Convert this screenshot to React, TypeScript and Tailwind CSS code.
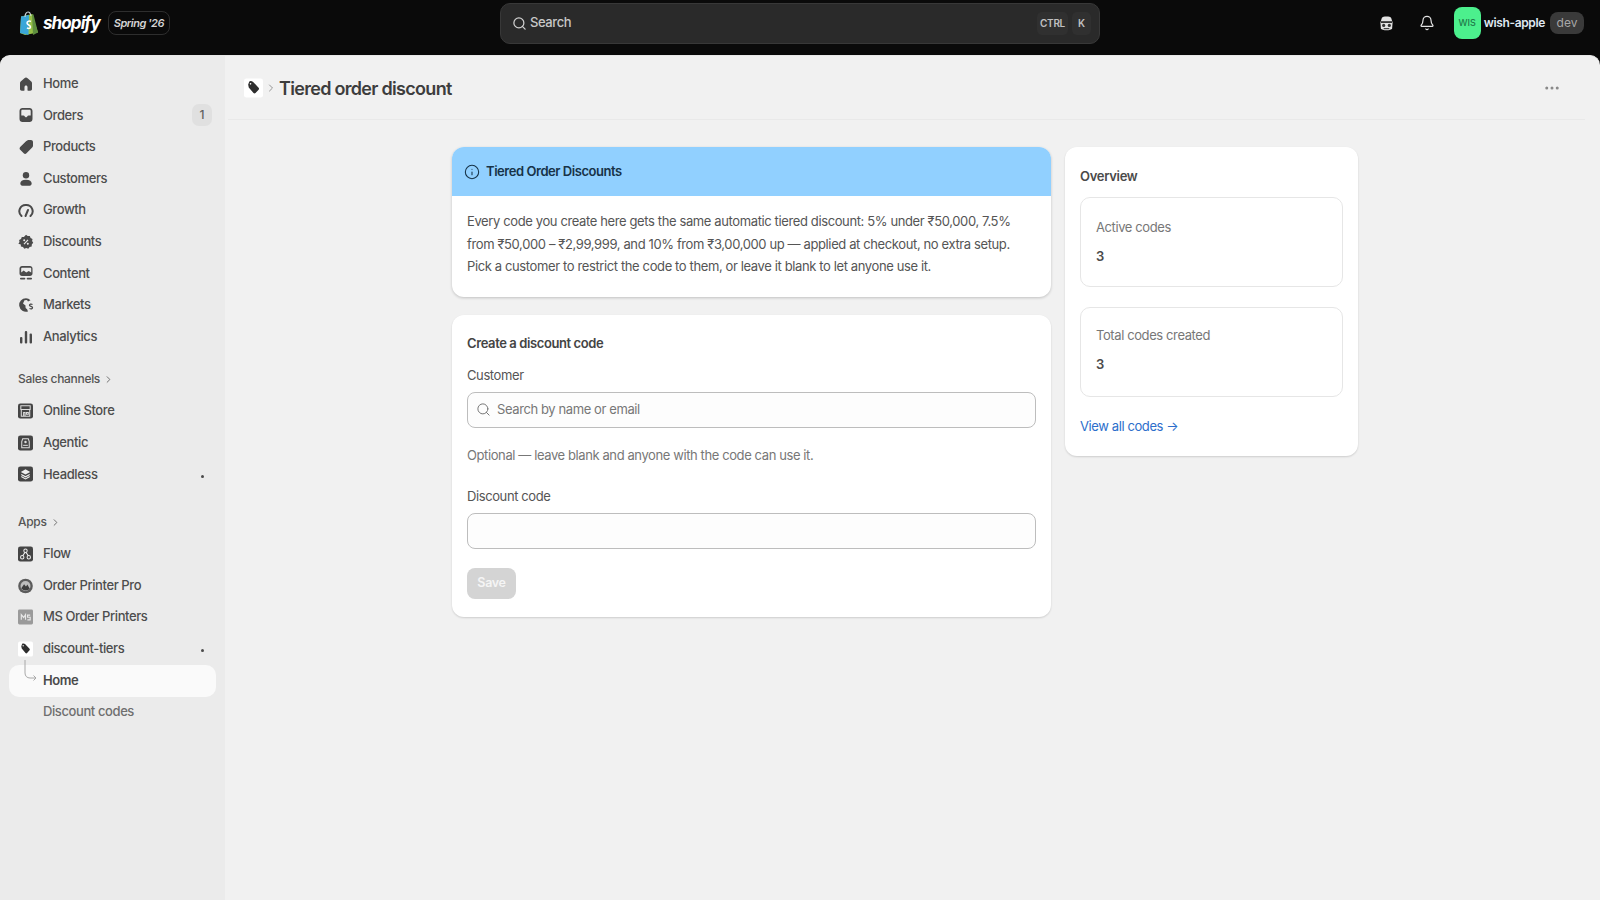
import { Search, Info, Bell, ChevronRight, MoreHorizontal } from 'lucide-react';
import type { ReactNode } from 'react';

const Ico = ({ children }: { children: ReactNode }) => (
  <svg viewBox="0 0 16 16" className="w-4 h-4 shrink-0" fill="#4a4a4a">{children}</svg>
);

const HomeIcon = () => <Ico><path d="M8 1.500c-.6 0-1.100.3-1.600.7L3 5.200c-.8.7-1 1.300-1 2.300V13c0 1 .8 1.700 1.700 1.700H6c.3 0 .5-.2.5-.5V11c0-.8.7-1.500 1.500-1.500s1.500.7 1.500 1.500v3.200c0 .3.2.5.5.5h2.300c.9 0 1.700-.7 1.700-1.700V7.500c0-1-.2-1.600-1-2.300L9.600 2.200C9.100 1.800 8.600 1.500 8 1.500z" /></Ico>;
const OrdersIcon = () => <Ico><path fillRule="evenodd" d="M4.500 1h7c1.700 0 3 1.300 3 3v8c0 1.700-1.300 3-3 3h-7c-1.700 0-3-1.300-3-3V4c0-1.700 1.300-3 3-3zM3.300 8.500V4c0-.7.500-1.200 1.200-1.200h7c.7 0 1.200.5 1.200 1.200v4.500h-2.200c-.5 0-.9.300-1.100.7-.1.300-.7 1-1.400 1s-1.300-.7-1.400-1c-.2-.4-.6-.7-1.100-.7z" /></Ico>;
const TagIcon = () => <Ico><path d="M9.300 1h3.700c1.100 0 2 .9 2 2v3.700c0 .6-.2 1.100-.6 1.500l-5.900 6.100c-.8.8-2 .8-2.800 0l-3.500-3.500c-.8-.8-.8-2 0-2.800l6.100-5.900c.4-.4.9-.6 1.500-.6z" /></Ico>;
const PersonIcon = () => <Ico><circle cx="8" cy="4.200" r="3.200" /><path d="M2.300 12.500c0-2.200 2-3.800 5.700-3.800s5.700 1.600 5.700 3.800c0 1.200-.8 2.200-2 2.200H4.300c-1.200 0-2-1-2-2.200z" /></Ico>;
const GrowthIcon = () => (
  <svg viewBox="0 0 16 16" className="w-4 h-4 shrink-0" fill="none" stroke="#4a4a4a" strokeWidth="2" strokeLinecap="round">
    <path d="M3.500 14A6.300 6.300 0 0 1 8 3a6.300 6.300 0 0 1 4.500 11" />
    <path d="M7.500 14 10 8" />
  </svg>
);
const DiscountIcon = () => (
  <Ico>
    <path d="M8 .8l1.700 1.300 2.100-.2.800 2 1.900 1-.4 2.100 1.100 1.800-1.400 1.600-.1 2.100-2.100.5-1.300 1.700-2-.7-2 .7-1.300-1.700-2.100-.5-.1-2.100L.4 9.800l1.100-1.800-.4-2.100 1.900-1 .8-2 2.100.2z" />
    <circle cx="6.200" cy="6.200" r="1" fill="#ebebeb" /><circle cx="9.800" cy="9.800" r="1" fill="#ebebeb" />
    <path d="M10 5.800 6 10.200" stroke="#ebebeb" strokeWidth="1.100" />
  </Ico>
);
const ContentIcon = () => (
  <Ico>
    <path fillRule="evenodd" d="M4 1h8c1.400 0 2.500 1.100 2.500 2.500v5c0 1.400-1.100 2.500-2.500 2.500H4c-1.400 0-2.500-1.100-2.500-2.500v-5C1.500 2.100 2.600 1 4 1zm-.8 6.500 2.500-2 2.500 2 2.500-1.500 2.500 1.500v-4c0-.5-.4-.8-.7-.8H4c-.4 0-.8.300-.8.800z" />
    <rect x="2" y="12.800" width="5.300" height="1.700" rx=".8" /><rect x="8.700" y="12.800" width="5.300" height="1.700" rx=".8" />
  </Ico>
);
const MarketsIcon = () => (
  <Ico>
    <path d="M8 1.200A6.800 6.800 0 1 0 10 14.500l-1-2.500c-.8-.3-1.500-1-1.500-2V8.500L5 6.500l1.500-3.300 2.500-.2 1 1.500 2.500-1.300A6.800 6.800 0 0 0 8 1.200z" />
    <path d="M14.500 7.500c-1.500-.8-3-.3-3 .8 0 1.300 3 .9 3 2.300 0 1.200-1.500 1.600-3 .9" fill="none" stroke="#4a4a4a" strokeWidth="1.300" />
  </Ico>
);
const AnalyticsIcon = () => (
  <Ico><rect x="2" y="8" width="2.400" height="6.500" rx="1" /><rect x="6.800" y="2" width="2.400" height="12.500" rx="1" /><rect x="11.600" y="4.500" width="2.400" height="10" rx="1" /></Ico>
);
const DarkSquare = ({ children }: { children: ReactNode }) => (
  <svg viewBox="0 0 16 16" className="w-[15px] h-[16px] shrink-0">
    <rect x="0" y="0" width="16" height="16" rx="2.500" fill="#454545" />
    {children}
  </svg>
);
const StoreIcon = () => (
  <DarkSquare>
    <path d="M3 2.500h10v4H3z" fill="none" stroke="#ddd" strokeWidth="1.100" />
    <path d="M3.500 7v6.500h9V7M6 13.500V9.500h1.500v4M9 9.500h2v2H9z" fill="none" stroke="#ddd" strokeWidth="1.100" />
  </DarkSquare>
);
const AgenticIcon = () => (
  <DarkSquare>
    <path d="M5 3.500h6l1 3v6.500H4V6.500z" fill="none" stroke="#ddd" strokeWidth="1.100" />
    <circle cx="8" cy="7" r="1.300" fill="#ddd" />
    <path d="M5.500 10.500h5" stroke="#ddd" strokeWidth="1.100" />
  </DarkSquare>
);
const HeadlessIcon = () => (
  <DarkSquare>
    <path d="M8 3 13 5.800 8 8.600 3 5.800z" fill="#eee" />
    <path d="M3.500 8.500 8 11l4.500-2.500M3.500 10.700 8 13.200l4.500-2.500" fill="none" stroke="#eee" strokeWidth="1.200" />
  </DarkSquare>
);
const FlowIcon = () => (
  <DarkSquare>
    <circle cx="8" cy="4.500" r="1.800" fill="none" stroke="#eee" strokeWidth="1.100" />
    <circle cx="4.500" cy="11.500" r="1.800" fill="none" stroke="#eee" strokeWidth="1.100" />
    <circle cx="11.500" cy="11.500" r="1.800" fill="none" stroke="#eee" strokeWidth="1.100" />
    <path d="M7.500 6.300 5 9.800M8.500 6.300 11 9.800" stroke="#eee" strokeWidth="1.100" />
  </DarkSquare>
);
const PrinterProIcon = () => (
  <svg viewBox="0 0 16 16" className="w-[15px] h-[16px] shrink-0">
    <circle cx="8" cy="8" r="7.800" fill="#5c5c5c" />
    <circle cx="8" cy="8" r="5.300" fill="#bdbdbd" />
    <path d="M3.500 10.500 6.500 6l2 2.500 1.500-2 2.500 4.500c-2.500 2.500-6.500 2.500-9-.5z" fill="#3d3d3d" />
  </svg>
);
const MsIcon = () => (
  <svg viewBox="0 0 16 16" className="w-[15px] h-[16px] shrink-0">
    <rect width="16" height="16" rx="1.500" fill="#9a9a9a" />
    <path d="M3.500 11V5.500L6 8.500l2-3V11M13 6H10.200v2.200H13V11h-3" fill="none" stroke="#e8e8e8" strokeWidth="1.200" />
  </svg>
);
const AppTag = ({ size }: { size: string }) => (
  <svg viewBox="0 0 16 16" className={size}>
    <rect width="16" height="16" rx="2" fill="#ffffff" />
    <path d="M4.500 2.500c.3-.5 1-.6 1.500-.4l1.500.6 4.800 5c.5.500.5 1.200 0 1.700l-2.600 2.900c-.5.500-1.200.5-1.700 0L4 7.500 3.500 5z" fill="#2e2e2e" />
    <circle cx="5.500" cy="4.500" r=".7" fill="#fff" />
  </svg>
);

const Item = ({ icon, label, right }: { icon: ReactNode; label: string; right?: ReactNode }) => (
  <div className="h-[31.6px] flex items-center pl-[18px] pr-[13px]">
    <span className="w-[25px] flex items-center">{icon}</span>
    <span className="text-[13px] font-medium text-[#4d4d4d] tracking-[-0.4px]">{label}</span>
    {right && <span className="ml-auto">{right}</span>}
  </div>
);

const Dot = () => <span className="block w-[3px] h-[3px] rounded-full bg-[#4a4a4a] mr-[8px] mt-[4px]" />;

const GroupLabel = ({ label }: { label: string }) => (
  <div className="h-[20px] flex items-center gap-[3px] pl-[18px] text-[12px] font-medium text-[#555555] tracking-[-0.3px]">
    {label}
    <ChevronRight size={11} strokeWidth={2} className="text-[#666666]" />
  </div>
);

const Field = ({ children, icon }: { children?: ReactNode; icon?: boolean }) => (
  <div className="h-[36px] rounded-[8px] border border-[#bdbdbd] bg-[#fdfdfd] flex items-center px-[8px] gap-[6px]">
    {icon && <Search size={15} strokeWidth={1.600} className="text-[#777777]" />}
    {children}
  </div>
);

const Stat = ({ label, pad }: { label: string; pad: string }) => (
  <div className={`h-[90px] rounded-[10px] border border-[#e6e6e6] px-[15px] ${pad}`}>
    <div className="text-[13px] leading-[20px] text-[#777777] tracking-[-0.4px]">{label}</div>
    <div className="mt-[9px] text-[13px] leading-[20px] font-semibold text-[#4a4a4a]">3</div>
  </div>
);

export default function App() {
  return (
    <div className="w-[1600px] h-[900px] overflow-hidden bg-[#0a0a0a] flex flex-col font-['Inter',sans-serif]">
      <header className="h-[55px] shrink-0 pb-[9px] grid grid-cols-[500px_600px_500px] items-center">
        <div className="flex items-center pl-[19px]">
          <svg viewBox="0 0 20 24" className="w-[20px] h-[24px] shrink-0">
            <path d="M2 5.500 13 3l6 18.500L6 24l-5-2z" fill="#95bf47" />
            <path d="M2 5.500 10 4l-.5 20-8.500-2z" fill="#3aa6d8" />
            <path d="M6 6c0-3 1.500-5 3-5s2.500 1.500 3 4" fill="none" stroke="#cfd8dc" strokeWidth="1.100" />
            <path d="M13 3l1.500.5L19 21.500 14 24z" fill="#5e8e3e" />
            <path d="M12 10.500c-1.500-.8-4-.4-4 1.500 0 2 3.500 2 3.500 4 0 1.500-2 1.800-3.500.8" fill="none" stroke="#fff" strokeWidth="1.500" />
          </svg>
          <span className="ml-[4px] text-[17px] font-bold italic text-white tracking-[-0.9px] leading-none">shopify</span>
          <span className="ml-[8px] h-[24px] px-[5px] rounded-[8px] border border-[#2e2e2e] flex items-center text-[11px] font-semibold italic text-[#d4d4d4] tracking-[-0.5px]">Spring '26</span>
        </div>
        <div className="h-[41px] rounded-[10px] bg-[#2a2a2a] border border-[#383838] flex items-center pl-[11px] pr-[8px]">
          <Search size={15} strokeWidth={2} className="text-[#d0d0d0]" />
          <span className="ml-[3px] text-[13px] font-medium text-[#c8c8c8] tracking-[-0.4px]">Search</span>
          <span className="ml-auto h-[23px] w-[31px] rounded-[5px] bg-[#303030] flex items-center justify-center text-[10px] font-semibold text-[#c0c0c0] tracking-[-0.3px]">CTRL</span>
          <span className="ml-[4px] h-[23px] w-[19px] rounded-[5px] bg-[#303030] flex items-center justify-center text-[10px] font-semibold text-[#c0c0c0]">K</span>
        </div>
        <div className="flex items-center justify-end pr-[16px]">
          <svg viewBox="0 0 16 18" className="w-[15px] h-[17px] mr-[25px]">
            <path d="M3 3c1-2 9-2 10 0l1.500 5-.5 6c-1 3-11 3-12 0L1.500 8z" fill="#e2e2e2" />
            <path d="M2 6.500h12v2H2z" fill="#333" />
            <circle cx="5" cy="11" r="1.700" fill="#333" /><circle cx="11" cy="11" r="1.700" fill="#333" />
            <path d="M5 14.500h6" stroke="#333" strokeWidth="1.200" />
          </svg>
          <Bell size={16} strokeWidth={1.800} className="text-[#e3e3e3] mr-[19px]" />
          <span className="w-[27px] h-[32px] rounded-[8px] bg-[#4cf08d] flex items-center justify-center text-[9px] font-medium text-[#1f7a4a]">WIS</span>
          <span className="ml-[3px] text-[12px] font-semibold text-[#dfe7f2] tracking-[-0.35px]">wish-apple</span>
          <span className="ml-[5px] h-[22px] w-[34px] rounded-[8px] bg-[#3a3a3a] flex items-center justify-center text-[12px] text-[#a8a8a8]">dev</span>
        </div>
      </header>

      <div className="flex-1 min-h-0 flex rounded-t-[10px] overflow-hidden bg-[#f1f1f1] border-t border-[#e8e8e8]">
        <aside className="w-[225px] shrink-0 bg-[#ebebeb] pt-[12px]">
          <Item icon={<HomeIcon />} label="Home" />
          <Item
            icon={<OrdersIcon />}
            label="Orders"
            right={<span className="w-[20px] h-[22px] rounded-[7px] bg-[#e0e0e0] flex items-center justify-center text-[12px] font-medium text-[#616161]">1</span>}
          />
          <Item icon={<TagIcon />} label="Products" />
          <Item icon={<PersonIcon />} label="Customers" />
          <Item icon={<GrowthIcon />} label="Growth" />
          <Item icon={<DiscountIcon />} label="Discounts" />
          <Item icon={<ContentIcon />} label="Content" />
          <Item icon={<MarketsIcon />} label="Markets" />
          <Item icon={<AnalyticsIcon />} label="Analytics" />
          <div className="mt-[17px] mb-[6px]"><GroupLabel label="Sales channels" /></div>
          <Item icon={<StoreIcon />} label="Online Store" />
          <Item icon={<AgenticIcon />} label="Agentic" />
          <Item icon={<HeadlessIcon />} label="Headless" right={<Dot />} />
          <div className="mt-[22px] mb-[6px]"><GroupLabel label="Apps" /></div>
          <Item icon={<FlowIcon />} label="Flow" />
          <Item icon={<PrinterProIcon />} label="Order Printer Pro" />
          <Item icon={<MsIcon />} label="MS Order Printers" />
          <Item icon={<AppTag size="w-[15px] h-[16px] shrink-0" />} label="discount-tiers" right={<Dot />} />
          <div className="relative mx-[9px] w-[207px] h-[32px] rounded-[10px] bg-[#fafafa] flex items-center pl-[34px] text-[13px] font-semibold text-[#4a4a4a] tracking-[-0.4px]">
            Home
            <svg viewBox="0 0 14 24" className="absolute left-[15px] top-[-5px] w-[14px] h-[24px]" fill="none" stroke="#a8a8a8" strokeWidth="1">
              <path d="M1 0v13c0 3 2 5 5 5h6M9.500 15.500 12 18l-2.500 2.500" />
            </svg>
          </div>
          <div className="h-[30px] flex items-center pl-[43px] text-[13px] font-medium text-[#6f6f6f] tracking-[-0.4px]">Discount codes</div>
        </aside>

        <main className="flex-1 min-w-0 flex flex-col">
          <div className="h-[64px] shrink-0 mr-[15px] ml-[3px] border-b border-[#e9e9e9] flex items-center pl-[16px] pr-[24px]">
            <AppTag size="w-[19px] h-[22px] shrink-0" />
            <ChevronRight size={12} strokeWidth={1.800} className="text-[#8a8a8a] ml-[2px] mr-[2px]" />
            <h1 className="mt-[2px] text-[18px] font-semibold text-[#3d3d3d] tracking-[-0.7px]">Tiered order discount</h1>
            <MoreHorizontal size={18} strokeWidth={2} className="ml-auto mt-[1px] text-[#8a8a8a]" />
          </div>
          <div className="pl-[227px] pt-[27px] flex items-start gap-[14px]">
            <div className="w-[599px] flex flex-col gap-[18px]">
              <section className="rounded-[12px] bg-white overflow-hidden shadow-[0_1px_3px_rgba(0,0,0,0.2)]">
                <div className="h-[49px] bg-[#91d0ff] flex items-center gap-[6px] pl-[12px] text-[13px] font-semibold text-[#173348] tracking-[-0.45px]">
                  <Info size={16} strokeWidth={1.600} />
                  Tiered Order Discounts
                </div>
                <p className="px-[15px] pt-[14px] pb-[19px] text-[13px] leading-[22.5px] text-[#555555] tracking-[-0.38px]">
                  Every code you create here gets the same automatic tiered discount: 5% under ₹50,000, 7.5% from ₹50,000 – ₹2,99,999, and 10% from ₹3,00,000 up — applied at checkout, no extra setup. Pick a customer to restrict the code to them, or leave it blank to let anyone use it.
                </p>
              </section>
              <section className="h-[302px] rounded-[12px] bg-white px-[15px] pt-[18px] shadow-[0_1px_2px_rgba(0,0,0,0.15)]">
                <h2 className="text-[13px] leading-[20px] font-semibold text-[#444444] tracking-[-0.4px]">Create a discount code</h2>
                <div className="mt-[12px] mb-[7px] text-[13px] leading-[20px] text-[#555555] tracking-[-0.4px]">Customer</div>
                <Field icon><span className="text-[13px] text-[#777777] tracking-[-0.4px]">Search by name or email</span></Field>
                <div className="mt-[17px] text-[13px] leading-[20px] text-[#777777] tracking-[-0.4px]">Optional — leave blank and anyone with the code can use it.</div>
                <div className="mt-[21px] mb-[7px] text-[13px] leading-[20px] text-[#555555] tracking-[-0.4px]">Discount code</div>
                <Field />
                <button className="mt-[19px] w-[49px] h-[31px] rounded-[8px] bg-[#d4d4d4] text-[12.5px] font-semibold text-[#f5f5f5] tracking-[-0.3px]">Save</button>
              </section>
            </div>
            <section className="w-[293px] h-[309px] rounded-[12px] bg-white px-[15px] pt-[19px] shadow-[0_1px_2px_rgba(0,0,0,0.15)]">
              <h2 className="text-[13px] leading-[20px] font-semibold text-[#4a4a4a] tracking-[-0.3px]">Overview</h2>
              <div className="mt-[11px] flex flex-col gap-[20px]">
                <Stat label="Active codes" pad="pt-[19px]" />
                <Stat label="Total codes created" pad="pt-[17px]" />
              </div>
              <div className="mt-[19px] text-[13px] leading-[20px] text-[#2c6ecb] tracking-[-0.4px]">View all codes →</div>
            </section>
          </div>
        </main>
      </div>
    </div>
  );
}
